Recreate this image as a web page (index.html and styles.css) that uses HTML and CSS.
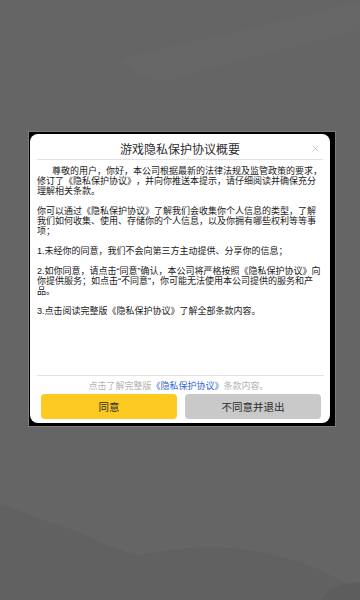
FILE: index.html
```html
<!DOCTYPE html>
<html lang="zh-CN">
<head>
<meta charset="utf-8">
<title>游戏隐私保护协议概要</title>
<link rel="stylesheet" href="styles.css">
</head>
<body>
<div class="page">
  <svg class="scenery" width="360" height="600" viewBox="0 0 360 600" aria-hidden="true">
    <path d="M120 60 C180 40 260 30 360 0 L360 30 C300 45 240 60 190 75 C160 85 140 80 120 60 Z" fill="#676767"/>
    <path d="M0 505 C20 510 40 520 60 525 C90 535 110 550 140 555 C170 550 200 545 230 548 C270 552 300 560 330 575 L360 590 L360 600 L0 600 Z" fill="#616161"/>
    <path d="M330 590 C340 585 350 583 360 582 L360 600 L320 600 Z" fill="#5d5d5d"/>
  </svg>
  <div class="frame">
    <div class="card">
      <div class="header">
        <h1 class="title">游戏隐私保护协议概要</h1>
        <svg class="close" width="7" height="7" viewBox="0 0 7 7" aria-hidden="true">
          <path d="M0.5 0.5 L6.5 6.5 M6.5 0.5 L0.5 6.5" stroke="#c4c4c4" stroke-width="0.9" fill="none"/>
        </svg>
      </div>
      <div class="rule"></div>
      <div class="body">
        <p class="indent">尊敬的用户，你好，本公司根据最新的法律法规及监管政策的要求，修订了《隐私保护协议》，并向你推送本提示，请仔细阅读并确保充分理解相关条款。</p>
        <p>你可以通过《隐私保护协议》了解我们会收集你个人信息的类型，了解我们如何收集、使用、存储你的个人信息，以及你拥有哪些权利等等事项；</p>
        <p>1.未经你的同意，我们不会向第三方主动提供、分享你的信息；</p>
        <p>2.如你同意，请点击“同意”确认，本公司将严格按照《隐私保护协议》向你提供服务；如点击“不同意”，你可能无法使用本公司提供的服务和产品。</p>
        <p>3.点击阅读完整版《隐私保护协议》了解全部条款内容。</p>
      </div>
      <div class="rule rule-bottom"></div>
      <p class="note">点击了解完整版<span class="link">《隐私保护协议》</span>条款内容。</p>
      <div class="actions">
        <button class="btn btn-agree">同意</button>
        <button class="btn btn-reject">不同意并退出</button>
      </div>
    </div>
  </div>
</div>
</body>
</html>
```

FILE: styles.css
```css
html, body {
  margin: 0;
  padding: 0;
}

body {
  font-family: "Liberation Sans", "Noto Sans CJK SC", sans-serif;
  background: #656565;
  text-spacing-trim: space-all;
}

.page {
  position: relative;
  width: 360px;
  height: 600px;
  overflow: hidden;
  background: #656565;
  padding-top: 131px;
  box-sizing: border-box;
}

.scenery {
  position: absolute;
  left: 0;
  top: 0;
}

.frame {
  position: relative;
  width: 303px;
  margin-left: 28px;
  background: #000;
  border: 1px solid #7c7c7c;
  padding: 2px 2px 3px 1px;
  box-sizing: content-box;
}

.card {
  width: 300px;
  height: 289px;
  box-sizing: border-box;
  padding-bottom: 4px;
  background: #fff;
  border-radius: 8px;
  display: flex;
  flex-direction: column;
}

.header {
  height: 25px;
  flex: none;
  display: flex;
  align-items: flex-start;
  justify-content: center;
  position: relative;
}

.title {
  margin: 7px 0 0;
  font-family: "Noto Sans CJK SC", sans-serif;
  font-size: 12px;
  line-height: 16px;
  font-weight: 400;
  color: #2e2e2e;
}

.close {
  position: absolute;
  right: 11px;
  top: 11px;
}

.rule {
  height: 1px;
  background: #e2e2e2;
  margin: 0 7px;
  flex: none;
}

.rule-bottom {
  margin: 0 6px 0 7px;
}

.body {
  flex: 1;
  min-height: 0;
  padding: 6px 0 0 7px;
  width: 286px;
  font-size: 9px;
  line-height: 10px;
  color: #1a1a1a;
  text-spacing-trim: space-all;
}

.body p {
  margin: 0 0 10px;
}

.body .indent {
  text-indent: 15px;
}

.note {
  margin: 4px 0 0;
  text-align: center;
  font-size: 9px;
  line-height: 12px;
  color: #b3b3b3;
  padding-right: 3px;
  flex: none;
}

.link {
  color: #2f68d3;
}

.actions {
  display: flex;
  gap: 8px;
  padding: 0 9px 0 11px;
  margin-top: 2px;
  flex: none;
}

.btn {
  width: 136px;
  height: 25px;
  border: none;
  border-radius: 4px;
  font-family: "Noto Sans CJK SC", sans-serif;
  font-size: 10.5px;
  line-height: 25px;
  padding: 0;
  color: #2b2b2b;
}

.btn-agree {
  background: #fdca22;
}

.btn-reject {
  background: #c9c9c9;
}
```
